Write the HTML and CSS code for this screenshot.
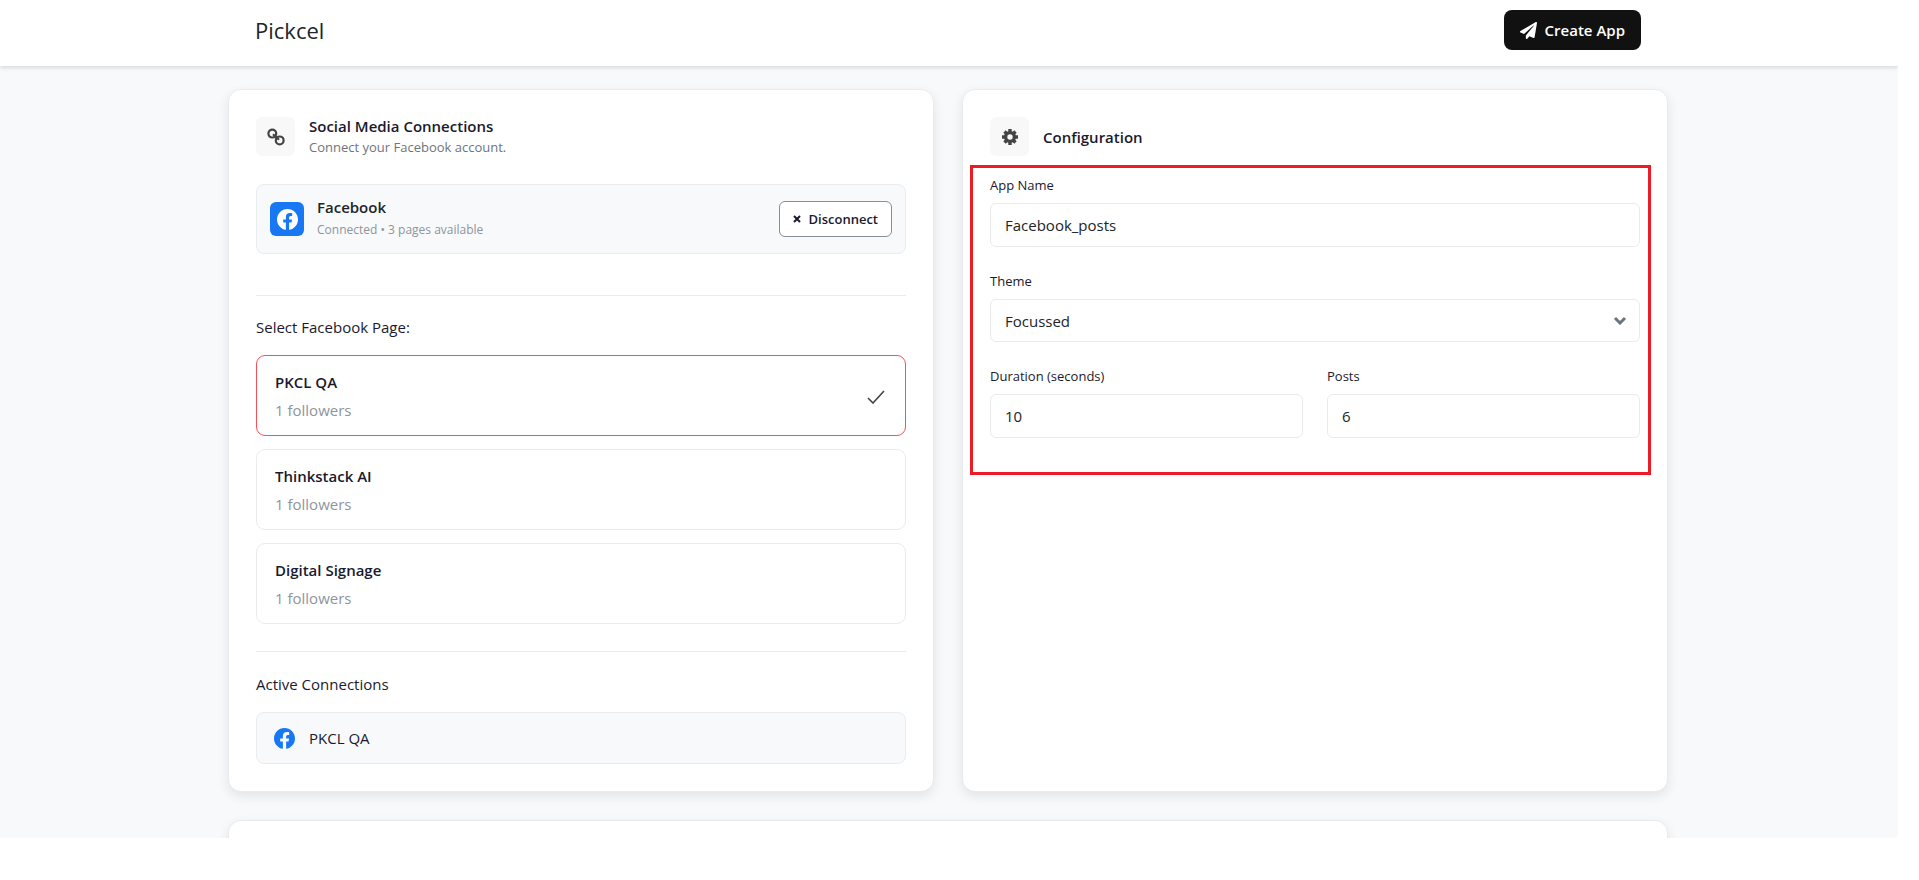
FILE: index.html
```html
<!DOCTYPE html>
<html lang="en">
<head>
<meta charset="utf-8">
<title>Pickcel</title>
<link rel="stylesheet" href="styles.css">
</head>
<body>
<svg class="sprite" aria-hidden="true">
  <symbol id="facebook" viewBox="8 8 496 496"><path d="M504 256C504 119 393 8 256 8S8 119 8 256c0 123.78 90.69 226.38 209.25 245V327.69h-63V256h63v-54.64c0-62.15 37-96.48 93.67-96.48 27.14 0 55.52 4.84 55.52 4.84v61h-31.28c-30.8 0-40.41 19.12-40.41 38.73V256h68.78l-11 71.69h-57.78V501C413.31 482.38 504 379.78 504 256z"/></symbol>
</svg>
<div class="page">
  <header class="topbar">
    <div class="topbar-inner">
      <h1 class="brand">Pickcel</h1>
      <button class="create" type="button">
        <svg class="plane" viewBox="0 0 512 512" aria-hidden="true"><path d="M476 3.2L12.5 270.6c-18.1 10.4-15.8 35.6 2.2 43.2L121 358.4l287.3-253.2c5.5-4.9 13.3 2.6 8.6 8.3L176 407v80.5c0 23.6 28.5 32.9 42.5 15.8L282 426l124.6 52.2c14.2 6 30.4-2.9 33-18.2l72-432C515 7.8 493.3-6.8 476 3.2z"/></svg>
        Create App
      </button>
    </div>
  </header>
  <main class="content">
    <section class="card">
      <div class="card-head">
        <span class="head-icon">
          <svg class="link-icon" viewBox="0 0 18 18" aria-hidden="true"><circle cx="5.3" cy="5.6" r="3.9"/><circle cx="12.7" cy="12.4" r="3.9"/><path d="M6 6.2l6 5.6"/></svg>
        </span>
        <div>
          <h2 class="card-title">Social Media Connections</h2>
          <p class="card-sub">Connect your Facebook account.</p>
        </div>
      </div>
      <div class="account">
        <span class="account-icon"><svg class="fb" aria-hidden="true"><use href="#facebook"/></svg></span>
        <div class="account-text">
          <h3 class="account-name">Facebook</h3>
          <p class="account-state">Connected • 3 pages available</p>
        </div>
        <button class="disconnect" type="button">
          <svg class="times" viewBox="0 0 8 8" aria-hidden="true"><path d="M1 1l6 6M7 1l-6 6"/></svg>
          Disconnect
        </button>
      </div>
      <div class="group group-pages">
        <h3 class="group-title">Select Facebook Page:</h3>
        <div class="options">
          <button class="option option-selected" type="button">
            <span class="option-text"><span class="option-name">PKCL QA</span><span class="option-meta">1 followers</span></span>
            <svg class="check" viewBox="0 0 18 16" aria-hidden="true"><path d="M1 10l5 5L17 3"/></svg>
          </button>
          <button class="option" type="button">
            <span class="option-text"><span class="option-name">Thinkstack AI</span><span class="option-meta">1 followers</span></span>
          </button>
          <button class="option" type="button">
            <span class="option-text"><span class="option-name">Digital Signage</span><span class="option-meta">1 followers</span></span>
          </button>
        </div>
      </div>
      <div class="group">
        <h3 class="group-title">Active Connections</h3>
        <div class="active"><svg class="fb" aria-hidden="true"><use href="#facebook"/></svg>PKCL QA</div>
      </div>
    </section>
    <section class="card">
      <div class="card-head">
        <span class="head-icon">
          <svg class="gear" viewBox="-8 -8 16 16" aria-hidden="true"><circle r="4.4"/><path d="M0-8V-5M0 5V8M-8 0H-5M5 0H8M-5.5-5.5l2 2M5.5 5.5l-2-2M-5.5 5.5l2-2M5.5-5.5l-2 2"/></svg>
        </span>
        <h2 class="card-title">Configuration</h2>
      </div>
      <form class="config">
        <div class="field field-wide">
          <label for="app-name">App Name</label>
          <input class="control" id="app-name" type="text" value="Facebook_posts">
        </div>
        <div class="field field-wide">
          <label for="theme">Theme</label>
          <div class="select-wrap">
            <select class="control" id="theme"><option>Focussed</option></select>
            <svg class="chevron" viewBox="0 0 14 9" aria-hidden="true"><path d="M2 2l5 5 5-5"/></svg>
          </div>
        </div>
        <div class="field">
          <label for="duration">Duration (seconds)</label>
          <input class="control" id="duration" type="text" inputmode="numeric" value="10">
        </div>
        <div class="field">
          <label for="posts">Posts</label>
          <input class="control" id="posts" type="text" inputmode="numeric" value="6">
        </div>
      </form>
    </section>
    <section class="card card-wide"></section>
  </main>
</div>
</body>
</html>
```
FILE: styles.css
```css
* { box-sizing: border-box; }
body {
  margin: 0;
  background: #fff;
  color: #1a1a2e;
  font: 14px/20px "Open Sans", "Noto Sans", sans-serif;
}
h1, h2, h3, p { margin: 0; font-weight: 400; }
button, input, select { font: inherit; color: inherit; }
.sprite { position: absolute; width: 0; height: 0; }

.page {
  height: calc(100vh - 42px);
  margin-right: 21px;
  overflow: hidden;
  background: #f8f9fb;
  border-radius: 0 0 4px 0;
}
.topbar {
  position: relative;
  padding: 10px 18px 16px 16px;
  background: #fff;
  box-shadow: 0 2px 4px rgba(0, 0, 0, .12);
}
.topbar-inner {
  display: flex;
  align-items: center;
  justify-content: space-between;
  max-width: 1386px;
  margin: 0 auto;
}
.brand { color: #212529; font-size: 22px; font-weight: 500; line-height: 28px; }
.create {
  display: flex;
  align-items: center;
  gap: 8px;
  height: 40px;
  padding: 0 16px;
  border: 0;
  border-radius: 8px;
  background: #111;
  color: #fff;
  font-size: 15px;
  font-weight: 600;
}
.plane { width: 17px; height: 17px; fill: #fff; }

.content {
  display: grid;
  grid-template-columns: 1fr 1fr;
  gap: 28px;
  max-width: 1442px;
  margin: 23px auto 0;
  padding-right: 2px;
}
.card {
  padding: 27px;
  border: 1px solid #e9ecef;
  border-radius: 13px;
  background: #fff;
  box-shadow: 0 4px 12px rgba(0, 0, 0, .09);
}
.card-wide { grid-column: 1 / -1; height: 200px; }
.card-head { display: flex; align-items: center; gap: 14px; height: 39px; }
.head-icon {
  display: grid;
  place-items: center;
  width: 39px;
  height: 39px;
  border-radius: 6px;
  background: #f8f8f8;
}
.link-icon { width: 18px; height: 18px; fill: none; stroke: #444; stroke-width: 2.2; }
.gear { width: 16px; height: 16px; fill: none; stroke: #444; stroke-width: 3.4; }
.card-title { font-size: 15px; font-weight: 600; }
.card-sub { color: #6c757d; font-size: 13px; line-height: 22px; }

.account {
  display: flex;
  align-items: center;
  gap: 13px;
  height: 70px;
  margin-top: 28px;
  padding: 0 13px;
  border: 1px solid #e9ecef;
  border-radius: 8px;
  background: #f8f9fb;
}
.account-icon {
  display: grid;
  place-items: center;
  width: 34px;
  height: 34px;
  border-radius: 6px;
  background: #1877f2;
}
.fb { width: 21px; height: 21px; fill: #1877f2; }
.account-icon .fb { fill: #fff; }
.account-text { flex: 1; }
.account-name { color: #212529; font-size: 15px; font-weight: 600; line-height: 22px; }
.account-state { color: #8e959c; font-size: 12px; line-height: 24px; }
.disconnect {
  display: flex;
  align-items: center;
  gap: 8px;
  height: 36px;
  padding: 0 13px;
  border: 1px solid #868e96;
  border-radius: 6px;
  background: #fff;
  font-size: 13px;
  font-weight: 600;
}
.times { width: 8px; height: 8px; fill: none; stroke: #1a1a2e; stroke-width: 2; }

.group { margin-top: 27px; padding-top: 21px; border-top: 1px solid #e9ecef; }
.group-pages { margin-top: 41px; padding-top: 20px; }
.group-title { font-size: 15px; line-height: 22px; }
.options { display: grid; gap: 13px; margin-top: 17px; }
.option {
  display: flex;
  align-items: center;
  justify-content: space-between;
  height: 81px;
  padding: 0 20px 0 18px;
  border: 1px solid #e9ecef;
  border-radius: 9px;
  background: #fff;
  text-align: left;
}
.option-selected { border-color: #f94f57; }
.option-text { display: grid; font-size: 15px; line-height: 28px; }
.option-name { font-weight: 600; }
.option-meta { color: #8e959c; }
.check { width: 18px; height: 16px; fill: none; stroke: #444; stroke-width: 1.6; }
.active {
  display: flex;
  align-items: center;
  gap: 14px;
  height: 52px;
  margin-top: 17px;
  padding: 0 17px;
  border: 1px solid #e9ecef;
  border-radius: 8px;
  background: #f8f9fb;
  font-size: 15px;
}

.config {
  display: grid;
  grid-template-columns: 1fr 1fr;
  gap: 24px;
  margin: 9px -11px 0 -20px;
  padding: 7px 8px 34px 17px;
  border: 3px solid #ed1c24;
}
.field { display: grid; gap: 8px; }
.field-wide { grid-column: 1 / -1; }
.field label { font-size: 13px; line-height: 20px; }
.control {
  display: block;
  width: 100%;
  height: 44px;
  padding: 0 14px;
  border: 1px solid #ebebeb;
  border-radius: 6px;
  background: #fff;
  color: #212529;
  font-size: 15px;
  appearance: none;
}
.select-wrap { position: relative; }
.select-wrap .control { height: 43px; }
.chevron {
  position: absolute;
  top: 17px;
  right: 13px;
  width: 14px;
  height: 9px;
  fill: none;
  stroke: #6c757d;
  stroke-width: 3;
  pointer-events: none;
}
```
